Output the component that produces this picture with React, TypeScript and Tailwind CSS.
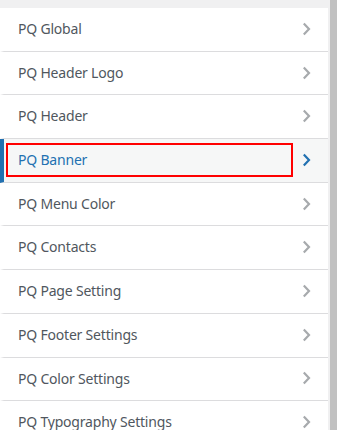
import React from "react";

const items = [
  "PQ Global",
  "PQ Header Logo",
  "PQ Header",
  "PQ Banner",
  "PQ Menu Color",
  "PQ Contacts",
  "PQ Page Setting",
  "PQ Footer Settings",
  "PQ Color Settings",
  "PQ Typography Settings",
];

function Chevron({ active }: { active: boolean }) {
  return (
    <svg width="9" height="14" viewBox="0 0 9 14" className="shrink-0">
      <path
        d="M1.8 1.5 L7 7 L1.8 12.5"
        fill="none"
        stroke={active ? "#2271b1" : "#a7aaad"}
        strokeWidth="2.2"
      />
    </svg>
  );
}

export default function App() {
  return (
    <div
      className="flex h-[430px] w-[337px] overflow-hidden bg-[#f0f0f1]"
      style={{ fontFamily: '"Noto Sans", "Open Sans", sans-serif' }}
    >
      <div className="flex w-[328px] flex-col pt-[8px]">
        {items.map((label) => {
          const active = label === "PQ Banner";
          return (
            <div
              key={label}
              className={`relative flex items-center justify-between border-b border-[#dcdcde] border-l-4 pt-[10px] pb-[11px] pl-[14px] pr-[17px] text-[14px] leading-[1.55] ${
                active
                  ? "border-l-[#2271b1] bg-[#f6f7f7] text-[#2271b1]"
                  : "border-l-white bg-white text-[#50575e]"
              }`}
            >
              <span className="tracking-[-0.2px]">{label}</span>
              <Chevron active={active} />
              {active && (
                <div className="pointer-events-none absolute left-[2px] top-[4px] h-[34px] w-[287px] border-2 border-[#ff0000]" />
              )}
            </div>
          );
        })}
      </div>
      <div className="w-[2px] bg-[#f0f0f1]" />
      <div className="w-[7px] bg-[#c1c1c1]" />
    </div>
  );
}
